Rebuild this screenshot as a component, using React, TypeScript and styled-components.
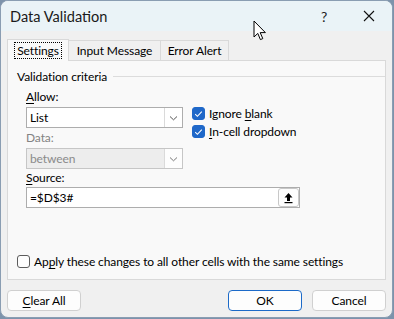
import React from "react";
import styled, { createGlobalStyle, css } from "styled-components";

const Global = createGlobalStyle`
  html, body { margin: 0; padding: 0; }
  body {
    background: #7d93ab;
    font-family: Lato, "Noto Sans", sans-serif;
    font-size: 12px;
    letter-spacing: -0.1px;
    color: #000;
  }
`;

const Window = styled.div`
  position: relative;
  box-sizing: border-box;
  width: 393px;
  height: 318px;
  background: #f0f0f0;
  border: 1px solid #8a9db2;
  border-radius: 8px;
  overflow: hidden;
  display: flex;
  flex-direction: column;
`;

const TitleBar = styled.div`
  height: 30px;
  flex: none;
  background: #eaf3f7;
  display: flex;
  align-items: center;
  padding-left: 9px;
`;

const Title = styled.div`
  font-size: 14.6px;
  letter-spacing: 0;
  flex: 1;
  color: #1a1a1a;
  padding-top: 1px;
`;

const TitleButton = styled.div<{ $w: number }>`
  width: ${(p) => p.$w}px;
  height: 30px;
  display: flex;
  align-items: center;
  justify-content: center;
  font-size: 14px;
  color: #222;
`;

const Body = styled.div`
  flex: 1;
  display: flex;
  flex-direction: column;
  padding: 8px 6px 0 6px;
`;

const TabRow = styled.div`
  display: flex;
  align-items: flex-end;
  height: 21px;
  position: relative;
  z-index: 1;
`;

const Tab = styled.div<{ $active?: boolean; $w: number }>`
  box-sizing: border-box;
  width: ${(p) => p.$w}px;
  height: ${(p) => (p.$active ? 22 : 20)}px;
  border: 1px solid #d9d9d9;
  border-bottom: none;
  background: ${(p) => (p.$active ? "#f9f9f9" : "#f0f0f0")};
  display: flex;
  align-items: center;
  justify-content: center;
  margin-bottom: ${(p) => (p.$active ? -1 : 0)}px;
  ${(p) =>
    !p.$active &&
    css`
      margin-left: -1px;
    `}
`;

const FocusText = styled.span`
  outline: 1px dotted #000;
  padding: 0 2px;
  line-height: 15px;
`;

const Panel = styled.div`
  box-sizing: border-box;
  height: 220px;
  background: #f9f9f9;
  border: 1px solid #d9d9d9;
  display: flex;
  flex-direction: column;
  padding: 7px 0 0 9px;
`;

const GroupTitle = styled.div`
  display: flex;
  align-items: center;
  gap: 6px;
  height: 16px;
  &::after {
    content: "";
    flex: 1;
    height: 1px;
    background: #dcdcdc;
  }
`;

const Criteria = styled.div`
  display: flex;
  padding-left: 9px;
  margin-top: 5px;
`;

const LeftCol = styled.div`
  display: flex;
  flex-direction: column;
`;

const Label = styled.div<{ $disabled?: boolean }>`
  height: 16px;
  line-height: 16px;
  color: ${(p) => (p.$disabled ? "#838383" : "#000")};
  margin-bottom: 2px;
`;

const U = styled.span`
  text-decoration: underline;
  text-underline-offset: 2px;
`;

const Combo = styled.div<{ $disabled?: boolean; $w: number }>`
  box-sizing: border-box;
  width: ${(p) => p.$w}px;
  height: 21px;
  border: 1px solid ${(p) => (p.$disabled ? "#c6c6c6" : "#adadad")};
  background: ${(p) => (p.$disabled ? "#ededed" : "#fff")};
  color: ${(p) => (p.$disabled ? "#8a8a8a" : "#000")};
  display: flex;
  align-items: center;
  margin-bottom: 2px;
`;

const ComboText = styled.div`
  flex: 1;
  padding-left: 3px;
`;

const DropBtn = styled.div<{ $disabled?: boolean }>`
  width: 17px;
  height: 19px;
  border-left: 1px solid #dadada;
  background: ${(p) => (p.$disabled ? "#fdfdfd" : "#fff")};
  display: flex;
  align-items: center;
  justify-content: center;
`;

const RightCol = styled.div`
  display: flex;
  flex-direction: column;
  gap: 5px;
  padding-top: 18px;
  padding-left: 9px;
`;

const CheckRow = styled.div`
  display: flex;
  align-items: center;
  gap: 4px;
  height: 13px;
`;

const Box = styled.div<{ $checked?: boolean }>`
  box-sizing: border-box;
  width: 13px;
  height: 13px;
  border-radius: 3px;
  background: ${(p) => (p.$checked ? "#1f68c9" : "#fdfdfd")};
  border: 1px solid ${(p) => (p.$checked ? "#1f68c9" : "#5c5c5c")};
  display: flex;
  align-items: center;
  justify-content: center;
`;

const SourceInput = styled.div`
  box-sizing: border-box;
  width: 274px;
  height: 21px;
  border: 1px solid #adadad;
  background: #fff;
  display: flex;
  align-items: center;
  margin-left: 9px;
`;

const SourceLabel = styled(Label)`
  margin-left: 9px;
  margin-top: -1px;
  margin-bottom: 1px;
`;

const RefButton = styled.div`
  box-sizing: border-box;
  width: 21px;
  height: 19px;
  border: 1px solid #c8c8c8;
  border-radius: 3px;
  background: #fdfdfd;
  display: flex;
  align-items: center;
  justify-content: center;
`;

const ApplyRow = styled(CheckRow)`
  margin-top: auto;
  margin-bottom: 11px;
  gap: 4px;
`;

const Footer = styled.div`
  display: flex;
  align-items: center;
  padding-top: 10px;
  gap: 10px;
`;

const Button = styled.div<{ $default?: boolean }>`
  box-sizing: border-box;
  width: 74px;
  height: 21px;
  border-radius: 4px;
  border: 1px solid ${(p) => (p.$default ? "#1c6ac8" : "#d0d0d0")};
  background: #fdfdfd;
  display: flex;
  align-items: center;
  justify-content: center;
`;

const Spacer = styled.div`
  flex: 1;
`;

const Cursor = styled.svg`
  position: absolute;
  left: 252px;
  top: 19px;
`;

const Chevron = ({ color }: { color: string }) => (
  <svg width="9" height="6" viewBox="0 0 9 6">
    <path d="M1 1.5 L4.5 4.8 L8 1.5" fill="none" stroke={color} strokeWidth="1" />
  </svg>
);

const Check = () => (
  <svg width="9" height="8" viewBox="0 0 9 8">
    <path d="M1.2 4.2 L3.4 6.3 L7.8 1.6" fill="none" stroke="#fff" strokeWidth="1.1" />
  </svg>
);

export default function App() {
  return (
    <>
      <Global />
      <Window>
        <TitleBar>
          <Title>Data Validation</Title>
          <TitleButton $w={44}>?</TitleButton>
          <TitleButton $w={46}>
            <svg width="12" height="12" viewBox="0 0 12 12">
              <path d="M1 1 L11 11 M11 1 L1 11" stroke="#111" strokeWidth="1.1" />
            </svg>
          </TitleButton>
        </TitleBar>
        <Body>
          <TabRow>
            <Tab $active $w={62}>
              <FocusText>Settings</FocusText>
            </Tab>
            <Tab $w={93}>Input Message</Tab>
            <Tab $w={69}>Error Alert</Tab>
          </TabRow>
          <Panel>
            <GroupTitle>Validation criteria</GroupTitle>
            <Criteria>
              <LeftCol>
                <Label>
                  <U>A</U>llow:
                </Label>
                <Combo $w={157}>
                  <ComboText>List</ComboText>
                  <DropBtn>
                    <Chevron color="#555" />
                  </DropBtn>
                </Combo>
                <Label $disabled>Data:</Label>
                <Combo $w={157} $disabled>
                  <ComboText>between</ComboText>
                  <DropBtn $disabled>
                    <Chevron color="#777" />
                  </DropBtn>
                </Combo>
              </LeftCol>
              <RightCol>
                <CheckRow>
                  <Box $checked>
                    <Check />
                  </Box>
                  <span>
                    Ignore <U>b</U>lank
                  </span>
                </CheckRow>
                <CheckRow>
                  <Box $checked>
                    <Check />
                  </Box>
                  <span>
                    <U>I</U>n-cell dropdown
                  </span>
                </CheckRow>
              </RightCol>
            </Criteria>
            <SourceLabel>
              <U>S</U>ource:
            </SourceLabel>
            <SourceInput>
              <ComboText>=$D$3#</ComboText>
              <RefButton>
                <svg width="11" height="12" viewBox="0 0 11 12">
                  <path d="M5.5 1 L1.5 5.5 H4 V9 H7 V5.5 H9.5 Z" fill="#000" />
                  <rect x="1.5" y="10" width="8" height="1.2" fill="#000" />
                </svg>
              </RefButton>
            </SourceInput>
            <ApplyRow>
              <Box />
              <span>
                Ap<U>p</U>ly these changes to all other cells with the same settings
              </span>
            </ApplyRow>
          </Panel>
          <Footer>
            <Button>
              <span>
                <U>C</U>lear All
              </span>
            </Button>
            <Spacer />
            <Button $default>OK</Button>
            <Button>Cancel</Button>
          </Footer>
        </Body>
        <Cursor width="14" height="22" viewBox="0 0 14 22">
          <path
            d="M1 1 L1 17 L4.8 13.4 L7.4 19.6 L9.8 18.6 L7.2 12.6 L12.4 12.6 Z"
            fill="#fff"
            stroke="#000"
            strokeWidth="1"
            strokeLinejoin="round"
          />
        </Cursor>
      </Window>
    </>
  );
}
